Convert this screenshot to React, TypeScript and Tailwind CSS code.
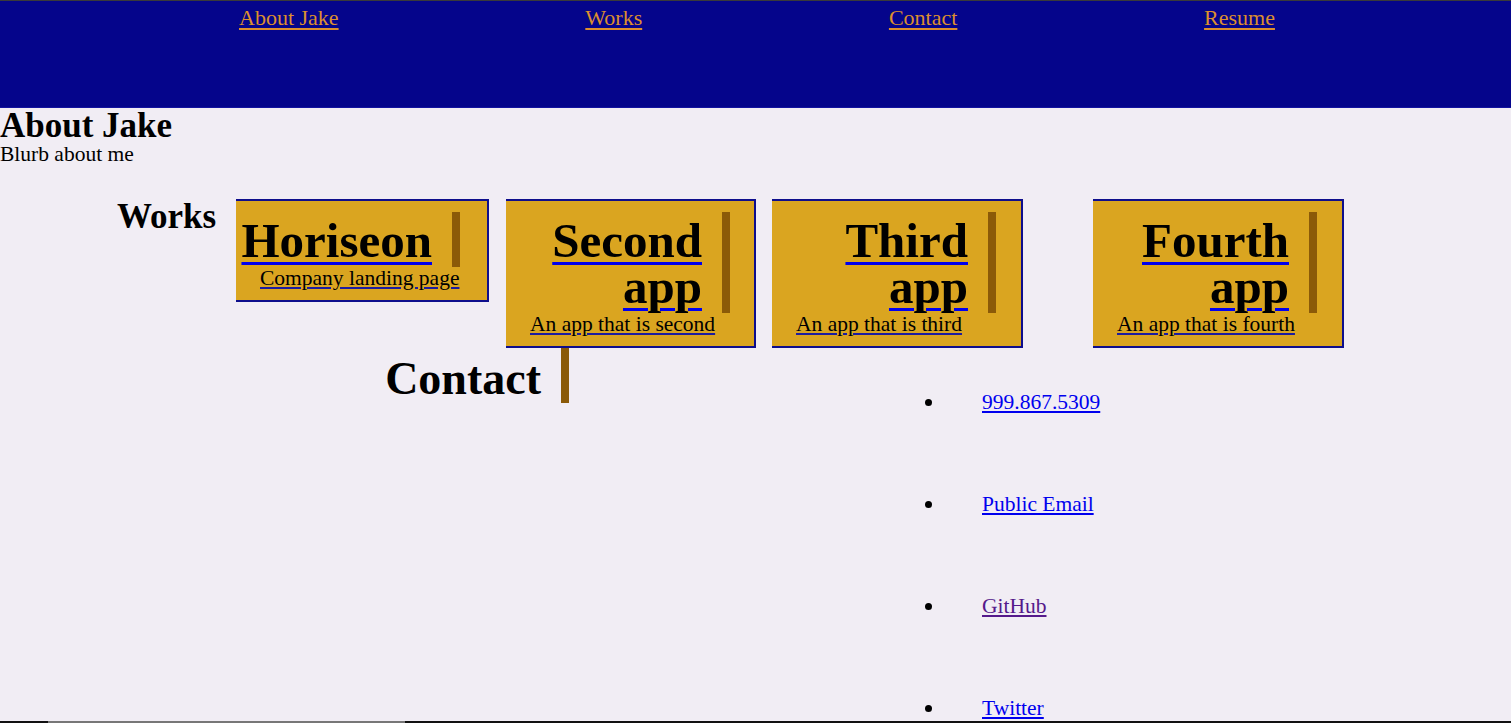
import React from "react";

const cards = [
  { title: "Horiseon", sub: "Company landing page", cls: "ml-[17px] w-[253px]" },
  { title: "Second app", sub: "An app that is second", cls: "ml-[17px] w-[250px]" },
  { title: "Third app", sub: "An app that is third", cls: "ml-[16px] w-[251px]" },
  { title: "Fourth app", sub: "An app that is fourth", cls: "ml-[70px] w-[251px]" },
];

const contacts = [
  { label: "999.867.5309", cls: "text-[#0000ee] decoration-[#0000ee]" },
  { label: "Public Email", cls: "text-[#0000ee] decoration-[#0000ee]" },
  { label: "GitHub", cls: "text-[#551a8b] decoration-[#551a8b]" },
  { label: "Twitter", cls: "text-[#0000ee] decoration-[#0000ee]" },
];

export default function App() {
  return (
    <div className="min-h-screen bg-[#f1edf4] font-['Liberation_Serif',serif] text-black">
      <header className="h-[108px] border-t border-t-[#3a3a3a] border-b border-b-[#1414a0] bg-[#05058b] pt-[4px]">
        <nav className="ml-[239px] flex w-[1036px] justify-between text-[22px] leading-[26px]">
          {["About Jake", "Works", "Contact", "Resume"].map((n) => (
            <a key={n} href="#" className="text-[#dc8f2e] underline decoration-[#dc8f2e] underline-offset-[3px]">
              {n}
            </a>
          ))}
        </nav>
      </header>

      <section className="pt-[2px]">
        <h2 className="text-[35px] font-bold leading-[32px]">About Jake</h2>
        <p className="text-[21.5px] leading-[24px]">Blurb about me</p>
      </section>

      <section className="mt-[33px] flex items-start">
        <h2 className="ml-[117px] w-[102px] pt-[2px] text-[35px] font-bold leading-[32px]">Works</h2>
        {cards.map((c) => (
          <div
            key={c.title}
            className={`${c.cls} border-t-2 border-r-2 border-b-2 border-[#0e0e8c] bg-[#daa520] pb-[10px]`}
          >
            <h3 className="ml-[3px] mt-[11px] w-[221px] border-r-8 border-[#8b5a08] pt-[6px] pb-[3px] pr-[20px] text-right text-[49px] font-bold leading-[46px]">
              <a href="#" className="text-black underline decoration-[#0000ee] decoration-[3px] underline-offset-[5px]">
                {c.title}
              </a>
            </h3>
            <p className="ml-[24px] text-[21.5px] leading-[23px]">
              <a href="#" className="text-black underline decoration-[#1c1ca0]">
                {c.sub}
              </a>
            </p>
          </div>
        ))}
      </section>

      <section className="flex items-start">
        <h3 className="ml-[348px] w-[221px] border-r-8 border-[#8b5a08] pt-[8px] pb-[1px] pr-[20px] text-right text-[46px] font-bold leading-[46px]">
          Contact
        </h3>
        <ul className="ml-[356px] flex flex-col gap-[78px] pt-[42px]">
          {contacts.map((c) => (
            <li key={c.label} className="flex h-[24px] items-center text-[21.5px] leading-[24px]">
              <span className="h-[7px] w-[7px] rounded-full bg-black" />
              <a href="#" className={`ml-[50px] underline ${c.cls}`}>
                {c.label}
              </a>
            </li>
          ))}
        </ul>
      </section>

      <div className="fixed bottom-0 left-0 flex h-[2px] w-full bg-[#111]">
        <div className="ml-[48px] h-full w-[357px] bg-[#777]" />
      </div>
    </div>
  );
}
